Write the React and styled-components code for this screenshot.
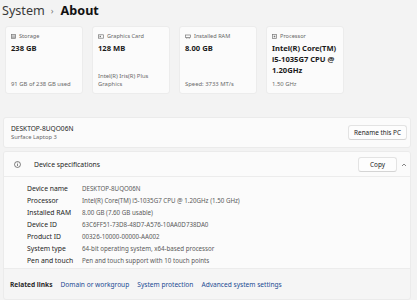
import React from "react";
import styled, { createGlobalStyle } from "styled-components";

const Global = createGlobalStyle`
  html, body { margin: 0; padding: 0; background: #f3f3f3; }
  body { font-family: "Noto Sans", "Open Sans", sans-serif; color: #1b1b1b; }
`;

const Page = styled.div`
  width: 417px;
  height: 300px;
  overflow: hidden;
  background: #f3f3f3;
  padding: 0 6px 0 3px;
  box-sizing: border-box;
`;

const Title = styled.div`
  display: flex;
  align-items: center;
  height: 21px;
  margin-left: -1px;
  font-size: 12.6px;
  line-height: 20px;
  color: #1b1b1b;
`;

const Crumb = styled.span`
  font-weight: ${(p) => (p.$current ? 700 : 400)};
  color: ${(p) => (p.$current ? "#111" : "#3a3a3a")};
`;

const Sep = styled.span`
  font-size: 9px;
  color: #777;
  margin: 0 7px 0 6px;
`;

const Cards = styled.div`
  display: flex;
  gap: 9px;
  margin: 5px 0 0 2px;
`;

const Card = styled.div`
  width: 78px;
  height: 68px;
  box-sizing: border-box;
  background: #fbfbfb;
  border: 1px solid #ececec;
  border-radius: 3px;
  padding: 5px;
  display: flex;
  flex-direction: column;
`;

const CardLabel = styled.div`
  display: flex;
  align-items: center;
  gap: 3px;
  font-size: 5.6px;
  line-height: 8px;
  color: #666;
`;

const CardValue = styled.div`
  margin-top: 3px;
  font-size: 7.6px;
  line-height: 11px;
  font-weight: 700;
  color: #1a1a1a;
`;

const CardFoot = styled.div`
  margin-top: auto;
  font-size: 5.9px;
  line-height: 8px;
  color: #6a6a6a;
`;

const Panel = styled.div`
  background: #fbfbfb;
  border: 1px solid #ebebeb;
  border-radius: 3px;
  box-sizing: border-box;
`;

const DeviceBand = styled(Panel)`
  margin-top: 23px;
  height: 31px;
  display: flex;
  align-items: center;
  justify-content: space-between;
  padding: 0 3px 0 7px;
`;

const DevName = styled.div`
  font-size: 6.6px;
  line-height: 9px;
  color: #1b1b1b;
`;

const DevSub = styled.div`
  font-size: 5.8px;
  line-height: 8px;
  color: #666;
`;

const Button = styled.button`
  font-family: inherit;
  font-size: 6.4px;
  color: #1b1b1b;
  background: #fdfdfd;
  border: 1px solid #e3e3e3;
  border-bottom-color: #d4d4d4;
  border-radius: 3px;
  height: 15px;
  width: ${(p) => p.$w}px;
  padding: 0;
  display: flex;
  align-items: center;
  justify-content: center;
`;

const Specs = styled(Panel)`
  margin-top: 3px;
  overflow: hidden;
  background: #f5f5f5;
`;

const SpecHeader = styled.div`
  height: 25px;
  display: flex;
  align-items: center;
  padding: 1px 1px 0 10px;
  box-sizing: border-box;
  background: #fbfbfb;
  border-bottom: 1px solid #ececec;
`;

const SpecTitle = styled.div`
  flex: 1;
  margin-left: 13px;
  font-size: 6.8px;
  color: #1b1b1b;
`;

const Chevron = styled.div`
  width: 10px;
  display: flex;
  justify-content: center;
  margin-left: 2px;
`;

const SpecBody = styled.div`
  background: #fbfbfb;
  padding: 6px 0 1px 23px;
  display: grid;
  grid-template-columns: 55px 1fr;
  border-bottom: 1px solid #ececec;
`;

const SpecLabel = styled.div`
  font-size: 6.8px;
  line-height: 12px;
  color: #1b1b1b;
`;

const SpecValue = styled.div`
  font-size: 6.2px;
  line-height: 12px;
  color: #5a5a5a;
  white-space: nowrap;
`;

const Related = styled.div`
  height: 30px;
  display: flex;
  align-items: center;
  padding: 0 0 0 6px;
  box-sizing: border-box;
  gap: 8px;
  font-size: 6.6px;
`;

const RelLabel = styled.span`
  font-weight: 700;
  color: #2a2a2a;
`;

const RelLink = styled.span`
  color: #1a4a93;
`;

const Icon = ({ kind }) => {
  const s = { stroke: "#777", strokeWidth: 0.7, fill: "none" };
  if (kind === "storage")
    return (
      <svg width="5" height="5" viewBox="0 0 5 5">
        <rect x="0.5" y="0.5" width="4" height="4" {...s} />
        <line x1="0.5" y1="2" x2="4.5" y2="2" {...s} />
        <line x1="0.5" y1="3.3" x2="4.5" y2="3.3" {...s} />
      </svg>
    );
  if (kind === "gpu")
    return (
      <svg width="6" height="5" viewBox="0 0 6 5">
        <rect x="0.5" y="0.8" width="5" height="3.4" {...s} />
        <rect x="1.6" y="1.8" width="1.4" height="1.4" fill="#777" />
      </svg>
    );
  if (kind === "ram")
    return (
      <svg width="6" height="5" viewBox="0 0 6 5">
        <rect x="0.5" y="1" width="5" height="2.6" {...s} />
        <line x1="1.5" y1="3.6" x2="1.5" y2="4.6" {...s} />
        <line x1="3" y1="3.6" x2="3" y2="4.6" {...s} />
        <line x1="4.5" y1="3.6" x2="4.5" y2="4.6" {...s} />
      </svg>
    );
  return (
    <svg width="5" height="5" viewBox="0 0 5 5">
      <rect x="0.5" y="0.5" width="4" height="4" {...s} />
      <rect x="1.7" y="1.7" width="1.6" height="1.6" fill="#777" />
    </svg>
  );
};

const cards = [
  { icon: "storage", label: "Storage", value: ["238 GB"], foot: ["91 GB of 238 GB used"] },
  { icon: "gpu", label: "Graphics Card", value: ["128 MB"], foot: ["Intel(R) Iris(R) Plus", "Graphics"] },
  { icon: "ram", label: "Installed RAM", value: ["8.00 GB"], foot: ["Speed: 3733 MT/s"] },
  { icon: "cpu", label: "Processor", value: ["Intel(R) Core(TM)", "i5-1035G7 CPU @", "1.20GHz"], foot: ["1.50 GHz"] },
];

const specs = [
  ["Device name", "DESKTOP-8UQO06N"],
  ["Processor", "Intel(R) Core(TM) i5-1035G7 CPU @ 1.20GHz (1.50 GHz)"],
  ["Installed RAM", "8.00 GB (7.60 GB usable)"],
  ["Device ID", "63C6FF51-73D8-48D7-A576-10AA0D738DA0"],
  ["Product ID", "00326-10000-00000-AA002"],
  ["System type", "64-bit operating system, x64-based processor"],
  ["Pen and touch", "Pen and touch support with 10 touch points"],
];

export default function App() {
  return (
    <Page>
      <Global />
      <Title>
        <Crumb>System</Crumb>
        <Sep>›</Sep>
        <Crumb $current>About</Crumb>
      </Title>
      <Cards>
        {cards.map((c) => (
          <Card key={c.label}>
            <CardLabel>
              <Icon kind={c.icon} />
              {c.label}
            </CardLabel>
            <CardValue>
              {c.value.map((v) => (
                <div key={v}>{v}</div>
              ))}
            </CardValue>
            <CardFoot>
              {c.foot.map((v) => (
                <div key={v}>{v}</div>
              ))}
            </CardFoot>
          </Card>
        ))}
      </Cards>
      <DeviceBand>
        <div>
          <DevName>DESKTOP-8UQO06N</DevName>
          <DevSub>Surface Laptop 3</DevSub>
        </div>
        <Button $w={59}>Rename this PC</Button>
      </DeviceBand>
      <Specs>
        <SpecHeader>
          <svg width="7" height="7" viewBox="0 0 8 8">
            <circle cx="4" cy="4" r="3.4" fill="none" stroke="#333" strokeWidth="0.7" />
            <line x1="4" y1="3.5" x2="4" y2="5.8" stroke="#333" strokeWidth="0.7" />
            <circle cx="4" cy="2.3" r="0.45" fill="#333" />
          </svg>
          <SpecTitle>Device specifications</SpecTitle>
          <Button $w={39}>Copy</Button>
          <Chevron>
            <svg width="6" height="4" viewBox="0 0 6 4">
              <polyline points="1,3 3,1 5,3" fill="none" stroke="#555" strokeWidth="0.7" />
            </svg>
          </Chevron>
        </SpecHeader>
        <SpecBody>
          {specs.map(([l, v]) => (
            <React.Fragment key={l}>
              <SpecLabel>{l}</SpecLabel>
              <SpecValue>{v}</SpecValue>
            </React.Fragment>
          ))}
        </SpecBody>
        <Related>
          <RelLabel>Related links</RelLabel>
          <RelLink>Domain or workgroup</RelLink>
          <RelLink>System protection</RelLink>
          <RelLink>Advanced system settings</RelLink>
        </Related>
      </Specs>
    </Page>
  );
}
